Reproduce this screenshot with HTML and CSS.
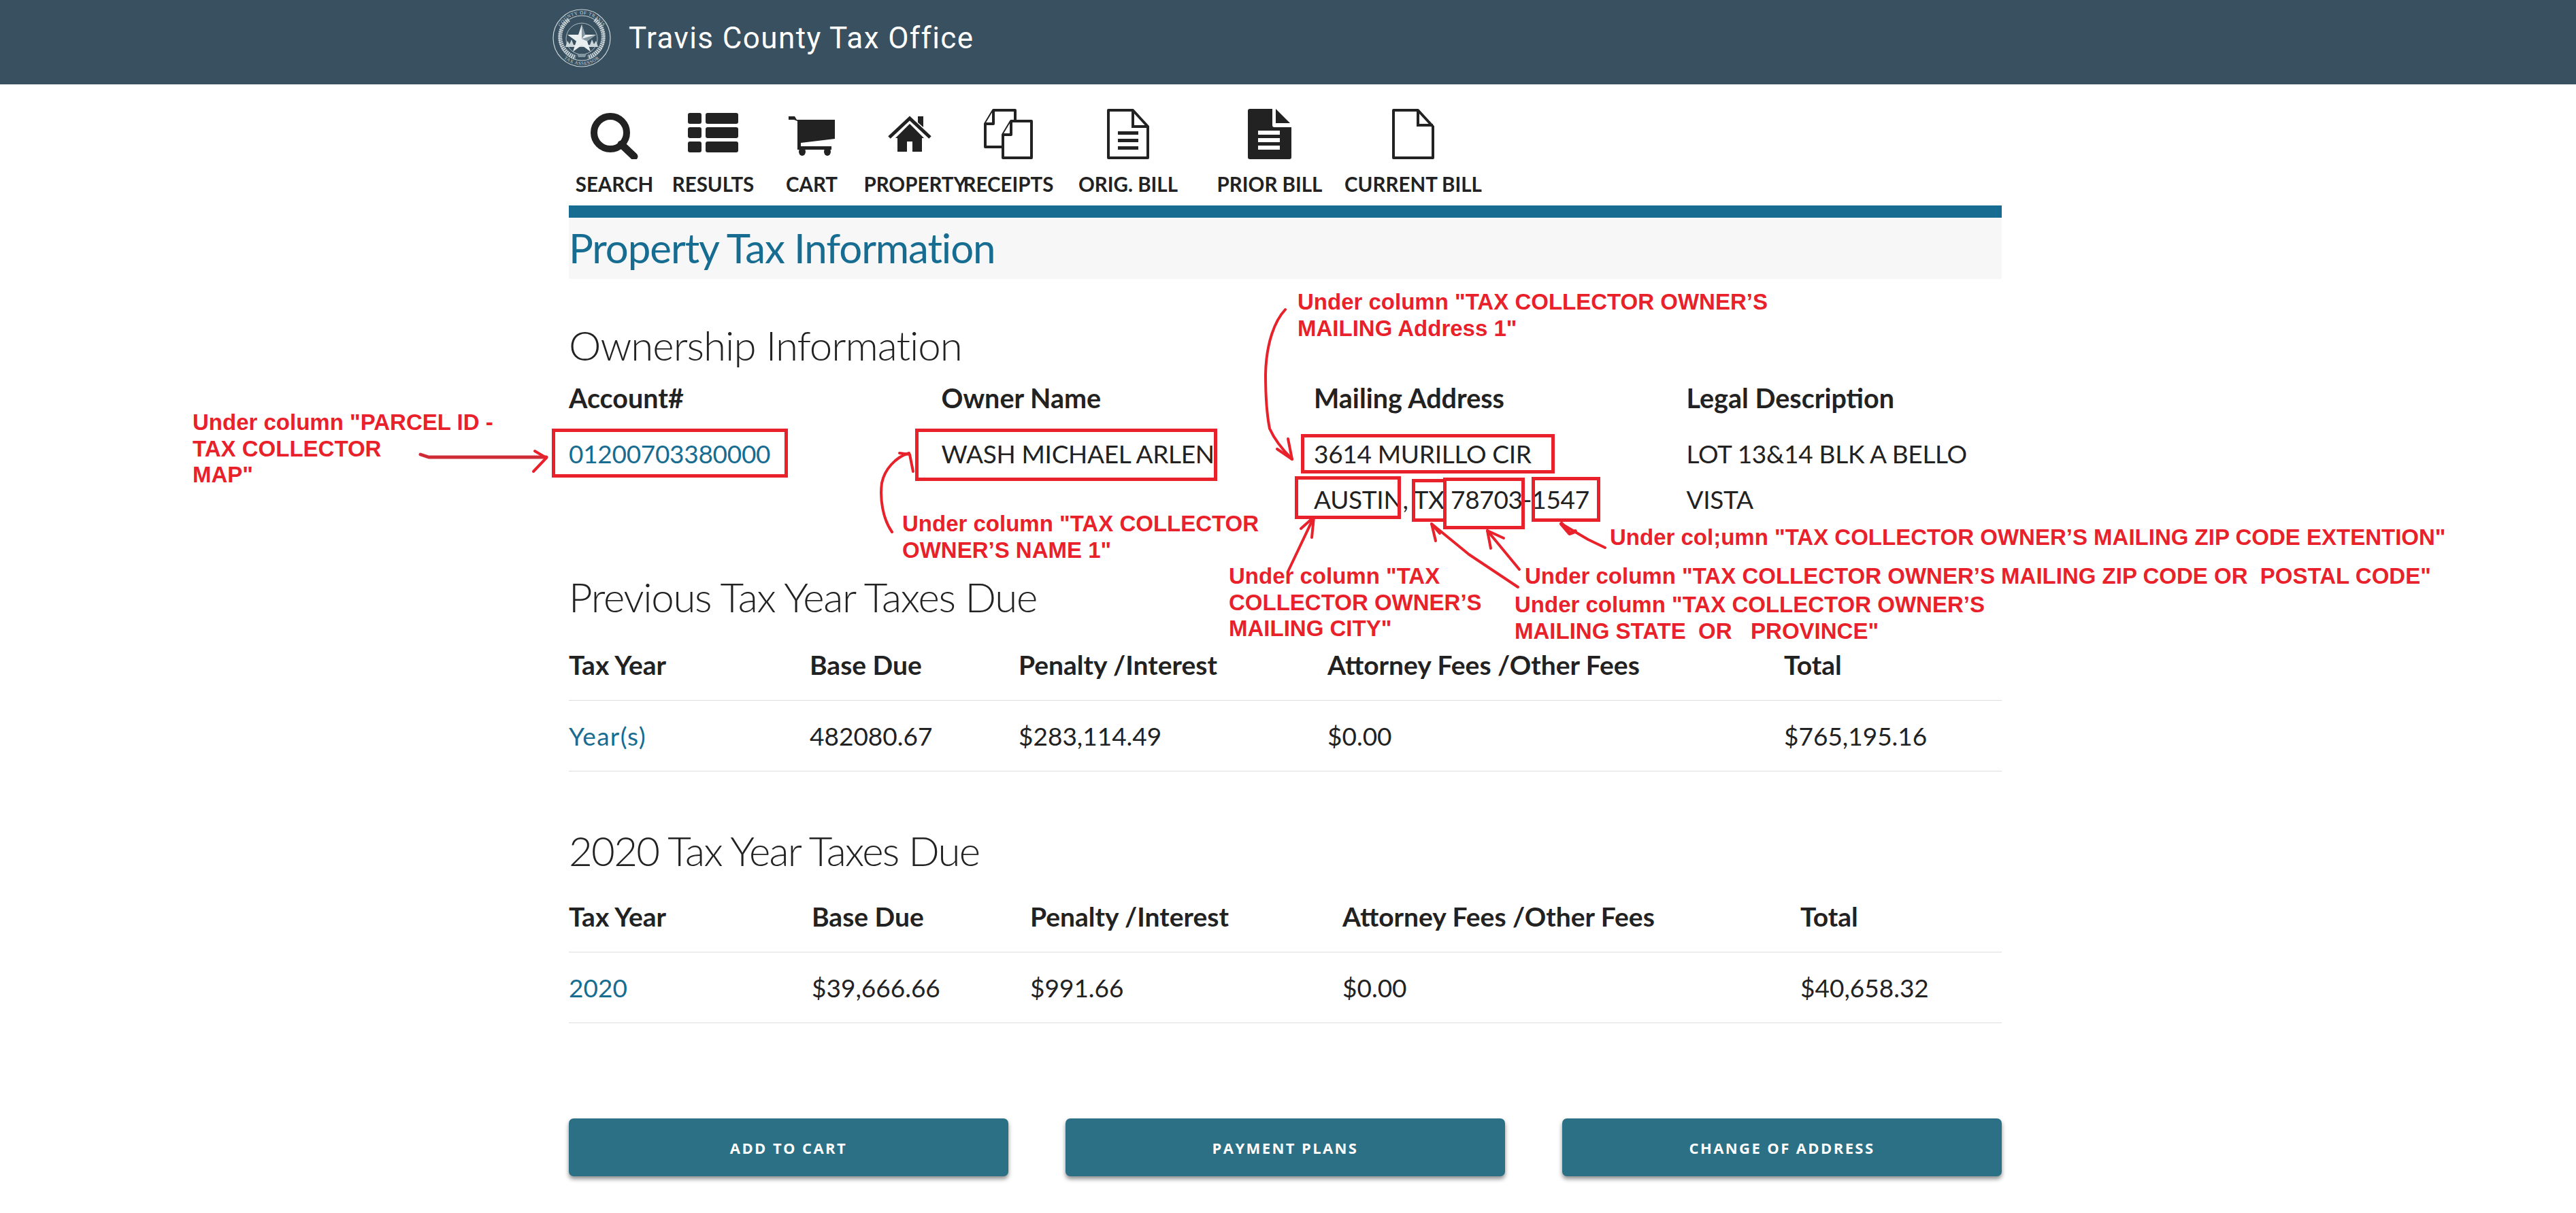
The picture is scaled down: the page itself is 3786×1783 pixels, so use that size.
FILE: index.html
```html
<!DOCTYPE html>
<html lang="en">
<head>
    <meta charset="UTF-8">
    <title>Travis County Tax Office</title>
    <link rel="stylesheet" href="styles.css">
</head>
<body>
    <header class="topbar">
        <div class="brand">
            <svg class="seal" viewBox="0 0 86 86">
                <defs>
                    <path id="seal-top" d="M8 43a35 35 0 0 1 70 0"/>
                    <path id="seal-bottom" d="M3.500 43a39.500 39.500 0 0 0 79 0"/>
                </defs>
                <circle cx="43" cy="43" r="42" fill="none" stroke="#cbd6da" stroke-width="1.2"/>
                <circle cx="43" cy="43" r="33" fill="none" stroke="#cbd6da" stroke-width="1"/>
                <path d="M24 16A31 31 0 0 0 34 71M62 16A31 31 0 0 1 52 71" fill="none" stroke="#cbd6da" stroke-width="6" stroke-dasharray="2 1"/>
                <circle cx="43" cy="44" r="23" fill="none" stroke="#cbd6da" stroke-width=".8"/>
                <text class="seal-text"><textPath href="#seal-top" startOffset="50%" text-anchor="middle">COUNTY OF TRAVIS</textPath></text>
                <text class="seal-text"><textPath href="#seal-bottom" startOffset="50%" text-anchor="middle">TAX ASSESSOR</textPath></text>
                <path d="M19 56l3-9 3 5 3-7 3 8 24 0 3-8 3 7 3-5 3 9z" fill="#cbd6da"/>
                <path d="M43 23l5 15h16l-13 9.500 5 15.500-13-9.500-13 9.500 5-15.500-13-9.500h16z" fill="#e9eef0"/>
                <path d="M43 23l5 15-5 6zM64 38l-21 6 8 3.500zM36 66h14l-2 5h-10z" fill="#8297a1"/>
            </svg>
            <span class="brand-name">Travis County Tax Office</span>
        </div>
    </header>

    <main class="page">
        <nav class="toolbar">
            <a class="tool tool-search">
                <svg class="icon" width="70" height="74" viewBox="0 0 70 74">
                    <circle cx="29" cy="35" r="24" fill="none" stroke="#222" stroke-width="10"/>
                    <path d="M45 52l19 18" stroke="#222" stroke-width="11" stroke-linecap="round"/>
                </svg>
                <span>SEARCH</span>
            </a>
            <a class="tool tool-results">
                <svg class="icon" width="74" height="74" viewBox="0 0 74 74">
                    <g fill="#222">
                        <rect x="0" y="6" width="20" height="16" rx="3"/>
                        <rect x="26" y="6" width="48" height="16" rx="3"/>
                        <rect x="0" y="27" width="20" height="16" rx="3"/>
                        <rect x="26" y="27" width="48" height="16" rx="3"/>
                        <rect x="0" y="48" width="20" height="16" rx="3"/>
                        <rect x="26" y="48" width="48" height="16" rx="3"/>
                    </g>
                </svg>
                <span>RESULTS</span>
            </a>
            <a class="tool tool-cart">
                <svg class="icon" width="68" height="74" viewBox="0 0 68 74">
                    <path d="M0 11h9l3 5h56v28l-50 6v5h45v5H13V18L8 16H0z" fill="#222"/>
                    <ellipse cx="20" cy="63" rx="5" ry="6" fill="#222"/>
                    <ellipse cx="57" cy="63" rx="5" ry="6" fill="#222"/>
                </svg>
                <span>CART</span>
            </a>
            <a class="tool tool-property">
                <svg class="icon" width="66" height="74" viewBox="0 0 66 74">
                    <path d="M33 22L12 43h3v20h14V48h8v15h14V43h3z" fill="#222"/>
                    <path d="M3 42L33 14l30 28" fill="none" stroke="#222" stroke-width="5"/>
                    <path d="M45 11h8v16l-8-7z" fill="#222"/>
                </svg>
                <span>PROPERTY</span>
            </a>
            <a class="tool tool-receipts">
                <svg class="icon" width="72" height="74" viewBox="0 0 72 74">
                    <g fill="#fff" stroke="#222" stroke-width="4" stroke-linejoin="round">
                        <path d="M14 2h32v54H2V22z"/>
                        <path d="M14 2v20H2"/>
                        <path d="M40 18h30v54H28V38z"/>
                        <path d="M40 18v20H28"/>
                    </g>
                </svg>
                <span>RECEIPTS</span>
            </a>
            <a class="tool tool-orig">
                <svg class="icon" width="62" height="74" viewBox="0 0 62 74">
                    <path d="M2 2h36l22 24v46H2z" fill="#fff" stroke="#222" stroke-width="4" stroke-linejoin="round"/>
                    <path d="M38 2v24h22" fill="none" stroke="#222" stroke-width="4"/>
                    <path d="M16 33h30v5H16zM16 44h30v5H16zM16 55h30v5H16z" fill="#222"/>
                </svg>
                <span>ORIG. BILL</span>
            </a>
            <a class="tool tool-prior">
                <svg class="icon" width="64" height="74" viewBox="0 0 64 74">
                    <path d="M0 3a3 3 0 0 1 3-3h33v24a3 3 0 0 0 3 3h25v44a3 3 0 0 1-3 3H3a3 3 0 0 1-3-3z" fill="#222"/>
                    <path d="M41 0l21 21H41z" fill="#222"/>
                    <path d="M15 32h32v6H15zM15 43h32v6H15zM15 54h32v6H15z" fill="#fff"/>
                </svg>
                <span>PRIOR BILL</span>
            </a>
            <a class="tool tool-current">
                <svg class="icon" width="62" height="74" viewBox="0 0 62 74">
                    <path d="M2 2h36l22 24v46H2z" fill="#fff" stroke="#222" stroke-width="4" stroke-linejoin="round"/>
                    <path d="M38 2v22h22" fill="none" stroke="#222" stroke-width="4"/>
                </svg>
                <span>CURRENT BILL</span>
            </a>
        </nav>

        <div class="title-bar">
            <h1>Property Tax Information</h1>
        </div>

        <h2 class="section-title owner-title">Ownership Information</h2>
        <div class="owner-grid">
            <div class="label">Account#</div>
            <div class="label">Owner Name</div>
            <div class="label">Mailing Address</div>
            <div class="label">Legal Description</div>
            <div class="value"><a class="link">01200703380000</a></div>
            <div class="value">WASH MICHAEL ARLEN</div>
            <div class="value">3614 MURILLO CIR<br>AUSTIN, TX 78703-1547</div>
            <div class="value">LOT 13&amp;14 BLK A BELLO VISTA</div>
        </div>

        <h2 class="section-title previous-title">Previous Tax Year Taxes Due</h2>
        <div class="tax-table previous-cols">
            <div class="tax-row tax-head">
                <div>Tax Year</div><div>Base Due</div><div>Penalty /Interest</div><div>Attorney Fees /Other Fees</div><div>Total</div>
            </div>
            <div class="tax-row">
                <div><a class="link link-word">Year(s)</a></div><div>482080.67</div><div>$283,114.49</div><div>$0.00</div><div>$765,195.16</div>
            </div>
        </div>

        <h2 class="section-title current-title">2020 Tax Year Taxes Due</h2>
        <div class="tax-table current-cols">
            <div class="tax-row tax-head">
                <div>Tax Year</div><div>Base Due</div><div>Penalty /Interest</div><div>Attorney Fees /Other Fees</div><div>Total</div>
            </div>
            <div class="tax-row">
                <div><a class="link">2020</a></div><div>$39,666.66</div><div>$991.66</div><div>$0.00</div><div>$40,658.32</div>
            </div>
        </div>

        <div class="actions">
            <button class="action-btn">ADD TO CART</button>
            <button class="action-btn">PAYMENT PLANS</button>
            <button class="action-btn">CHANGE OF ADDRESS</button>
        </div>
    </main>

    <!-- red markup drawn over the page -->
    <div class="box box-account"></div>
    <div class="box box-owner"></div>
    <div class="box box-street"></div>
    <div class="box box-city"></div>
    <div class="box box-state"></div>
    <div class="box box-zip"></div>
    <div class="box box-ext"></div>

    <svg class="arrows" width="3786" height="1783" viewBox="0 0 3786 1783">
        <g fill="none" stroke="#e8212b" stroke-width="4" stroke-linecap="round" stroke-linejoin="round">
            <path d="M618 668l12 4h173" stroke="#cf2a35" stroke-width="5"/>
            <path d="M786 663l17 10-19 20"/>
            <path d="M1311 782c-14-20-18-50-15-72 4-20 20-38 40-44"/>
            <path d="M1322 666l15 2 5 25"/>
            <path d="M1889 455c-15 16-28 48-29 95 0 30 2 60 6 80 8 18 20 32 33 45"/>
            <path d="M1877 660l22 15-6-30"/>
            <path d="M1893 840l38-80"/>
            <path d="M1912 777l19-17-3 30"/>
            <path d="M2231 863l-72-48-55-45"/>
            <path d="M2110 795l-6-25 12 14"/>
            <path d="M2233 837l-47-57"/>
            <path d="M2191 806l-5-26 24 11"/>
            <path d="M2359 805l-25-12-39-23"/>
            <path d="M2295 770l12 14 8-3" stroke-width="6"/>
        </g>
    </svg>

    <p class="note note-parcel">Under column "PARCEL ID -<br>TAX COLLECTOR<br>MAP"</p>
    <p class="note note-name">Under column "TAX COLLECTOR<br>OWNER’S NAME 1"</p>
    <p class="note note-address">Under column "TAX COLLECTOR OWNER’S<br>MAILING Address 1"</p>
    <p class="note note-city">Under column "TAX<br>COLLECTOR OWNER’S<br>MAILING CITY"</p>
    <p class="note note-state">Under column "TAX COLLECTOR OWNER’S<br>MAILING STATE&nbsp; OR &nbsp; PROVINCE"</p>
    <p class="note note-zip">Under column "TAX COLLECTOR OWNER’S MAILING ZIP CODE OR&nbsp; POSTAL CODE"</p>
    <p class="note note-ext">Under col;umn "TAX COLLECTOR OWNER’S MAILING ZIP CODE EXTENTION"</p>
</body>
</html>
```

FILE: styles.css
```css
* { box-sizing: border-box; }
html, body { height: 1783px; overflow: hidden; }
body {
    position: relative;
    margin: 0;
    background: #fff;
    color: #222;
    font-family: Lato, "Open Sans", sans-serif;
}

.topbar {
    height: 124px;
    background: #38505f;
    padding-left: 812px;
}
.brand {
    display: flex;
    align-items: center;
    gap: 26px;
    padding-top: 13px;
}
.seal { width: 86px; height: 86px; flex: none; }
.seal-text { font: 7px "Liberation Serif", serif; fill: #cbd6da; letter-spacing: .6px; }
.brand-name {
    font: 400 44px Roboto, sans-serif;
    letter-spacing: 1.4px;
    color: #fff;
    line-height: 58px;
}

.page { width: 2106px; margin-left: 836px; }

.toolbar {
    display: flex;
    height: 178px;
    padding-top: 36px;
}
.tool {
    display: flex;
    flex-direction: column;
    align-items: center;
    flex: none;
    white-space: nowrap;
    font-size: 29.5px;
    font-weight: 700;
    color: #222;
}
.tool .icon { margin-bottom: 15px; flex: none; }
.tool span { line-height: 44px; }
.tool-search { width: 134px; }
.tool-results { width: 156px; }
.tool-cart { width: 134px; }
.tool-property { width: 154px; }
.tool-property span { margin-left: 16px; }
.tool-receipts { width: 136px; }
.tool-orig { width: 216px; }
.tool-prior { width: 200px; }
.tool-current { width: 222px; }

.title-bar {
    height: 108px;
    border-top: 18px solid #176d91;
    background: #f7f7f8;
}
h1 {
    margin: 0;
    font-size: 60px;
    font-weight: 400;
    line-height: 88px;
    letter-spacing: -1.1px;
    color: #176d91;
}

.section-title {
    margin: 0;
    font-size: 60px;
    font-weight: 300;
    line-height: 80px;
    color: #222;
}
.owner-title { margin-top: 57px; letter-spacing: -1px; }
.previous-title { margin-top: 70px; letter-spacing: -1.3px; }
.current-title { margin-top: 76px; letter-spacing: -1.7px; }

.owner-grid {
    display: grid;
    grid-template-columns: 547.5px 547.5px 547.5px 463px;
    font-size: 37px;
}
.label {
    font-size: 39.5px;
    font-weight: 700;
    line-height: 40px;
    margin-top: 18px;
    margin-bottom: 28px;
}
.value { line-height: 67px; letter-spacing: -.3px; }
.link { color: #176d91; }
.link-word { letter-spacing: 1.3px; }

.tax-table { font-size: 37px; }
.previous-cols { margin-top: 8px; }
.current-cols { margin-top: 5px; }
.tax-row {
    display: grid;
    height: 104px;
    align-items: center;
    border-bottom: 1px solid #dcdfe1;
}
.tax-head { font-size: 39px; font-weight: 700; height: 105px; }
.previous-cols .tax-row { grid-template-columns: 354px 307px 454px 671px 320px; }
.current-cols .tax-row { grid-template-columns: 357px 321px 459px 673px 296px; }

.actions {
    display: flex;
    justify-content: space-between;
    margin-top: 140px;
}
.action-btn {
    width: 646px;
    height: 85px;
    border: 0;
    border-radius: 7px;
    background: #2b7085;
    box-shadow: 0 4px 6px rgba(0,0,0,.45);
    color: #fff;
    font: 700 22px "Open Sans", sans-serif;
    letter-spacing: 2.4px;
}

/* markup layer */
.arrows { position: absolute; left: 0; top: 0; pointer-events: none; }
.box { position: absolute; border: 5px solid #e8212b; }
.box-account { left: 811px; top: 630px; width: 347px; height: 72px; }
.box-owner { left: 1345px; top: 630px; width: 444px; height: 77px; }
.box-street { left: 1912px; top: 638px; width: 373px; height: 58px; }
.box-city { left: 1903px; top: 700px; width: 156px; height: 63px; }
.box-state { left: 2075px; top: 704px; width: 51px; height: 63px; }
.box-zip { left: 2121px; top: 702px; width: 120px; height: 76px; }
.box-ext { left: 2251px; top: 701px; width: 101px; height: 66px; }

.note {
    position: absolute;
    margin: 0;
    color: #e8212b;
    font: 700 33px/38.5px "Liberation Sans", Arial, sans-serif;
    white-space: nowrap;
}
.note-parcel { left: 283px; top: 602px; }
.note-name { left: 1326px; top: 751px; }
.note-address { left: 1907px; top: 425px; }
.note-city { left: 1806px; top: 828px; }
.note-state { left: 2226px; top: 870px; }
.note-zip { left: 2241px; top: 828px; }
.note-ext { left: 2366px; top: 771px; }
```
